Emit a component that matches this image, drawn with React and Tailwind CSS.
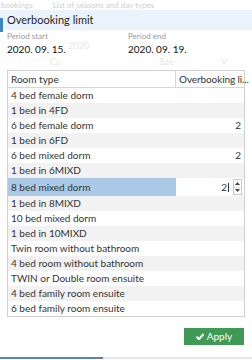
import { useState } from "react";

const rooms = [
  { name: "4 bed female dorm", limit: "" },
  { name: "1 bed in 4FD", limit: "" },
  { name: "6 bed female dorm", limit: "2" },
  { name: "1 bed in 6FD", limit: "" },
  { name: "6 bed mixed dorm", limit: "2" },
  { name: "1 bed in 6MIXD", limit: "" },
  { name: "8 bed mixed dorm", limit: "2", editing: true },
  { name: "1 bed in 8MIXD", limit: "" },
  { name: "10 bed mixed dorm", limit: "" },
  { name: "1 bed in 10MIXD", limit: "" },
  { name: "Twin room without bathroom", limit: "" },
  { name: "4 bed room without bathroom", limit: "" },
  { name: "TWIN or Double room ensuite", limit: "" },
  { name: "4 bed family room ensuite", limit: "" },
  { name: "6 bed family room ensuite", limit: "" },
];

const Spinner = () => (
  <div className="flex flex-col w-[9px] h-[16px] border border-[#c8c8c8] bg-white">
    <div className="flex-1 flex items-center justify-center border-b border-[#dcdcdc]">
      <svg width="5" height="3" viewBox="0 0 5 3">
        <path d="M0 3 L2.5 0 L5 3 Z" fill="#444" />
      </svg>
    </div>
    <div className="flex-1 flex items-center justify-center">
      <svg width="5" height="3" viewBox="0 0 5 3">
        <path d="M0 0 L2.5 3 L5 0 Z" fill="#444" />
      </svg>
    </div>
  </div>
);

const App = () => {
  const [selected] = useState(6);

  return (
    <div className="relative w-[252px] h-[360px] overflow-hidden bg-white font-['Lato',sans-serif] text-[#333]">
      {/* page behind the dialog, faded */}
      <div className="h-[10px] flex items-center gap-[18px] pl-[1px] text-[8px] leading-[9px] text-[#cfcfcf]">
        <span>bookings</span>
        <span className="bg-white px-[2px]">List of seasons and day types</span>
      </div>

      <div className="relative h-[20px] bg-[#eaf3fb] flex items-center pl-[7px]">
        <div className="absolute left-0 top-[8px] w-[3px] h-[14px] bg-[#3b86c6]" />
        <span className="text-[11px] text-[#1f1f1f]">Overbooking limit</span>
      </div>

      <div className="relative grid grid-cols-[121px_1fr] px-[7px] pt-[1px] h-[40px]">
        <div>
          <div className="text-[8px] leading-[11px] text-[#9a9a9a]">Period start</div>
          <div className="text-[10px] leading-[14px] text-[#111]">2020. 09. 15.</div>
        </div>
        <div>
          <div className="text-[8px] leading-[11px] text-[#9a9a9a]">Period end</div>
          <div className="text-[10px] leading-[14px] text-[#111]">2020. 09. 19.</div>
        </div>
        {/* ghosted text of the page below */}
        <span className="absolute left-[68px] top-[9px] text-[9px] text-[#e6e6e6]">2020</span>
        <span className="absolute left-[50px] top-[25px] text-[9px] text-[#e6e6e6]">Cs</span>
        <span className="absolute left-[160px] top-[25px] text-[9px] text-[#e6e6e6]">Sze</span>
        <span className="absolute left-[221px] top-[25px] text-[9px] text-[#e6e6e6]">V</span>
        <span className="absolute left-0 top-[25px] w-[3px] h-[3px] border-y border-[#333] -translate-x-[7px]" />
      </div>

      <div className="mx-[7px] w-[238px] border border-[#cfcfcf] text-[10px]">
        <div className="grid grid-cols-[168px_1fr] h-[17px] border-b border-[#d6d6d6] bg-white">
          <div className="flex items-center pl-[3px] border-r border-[#d6d6d6]">Room type</div>
          <div className="flex items-center pl-[3px] whitespace-nowrap tracking-[-0.1px]">Overbooking li...</div>
        </div>
        {rooms.map((room, i) => (
          <div
            key={room.name}
            className={
              "grid grid-cols-[168px_1fr] " +
              (i === selected ? "h-[18px] bg-white" : "h-[15px] " + (i % 2 === 0 ? "bg-white" : "bg-[#f2f2f2]"))
            }
          >
            <div
              className={
                "flex items-center pl-[3px] whitespace-nowrap overflow-hidden " +
                (i === selected ? "bg-[#a9c9e7]" : "")
              }
            >
              {room.name}
            </div>
            {i === selected ? (
              <div className="flex items-center justify-end gap-[4px] pr-[2px]">
                <span>
                  {room.limit}
                  <span className="inline-block w-[1px] h-[9px] bg-[#333] align-middle ml-[1px]" />
                </span>
                <Spinner />
              </div>
            ) : (
              <div className="flex items-center justify-end pr-[3px]">{room.limit}</div>
            )}
          </div>
        ))}
      </div>

      <div className="flex justify-end pr-[8px] pt-[11px]">
        <button className="flex items-center gap-[3px] h-[17px] w-[60px] justify-center bg-[#3e9a55] text-white text-[10px]">
          <svg width="8" height="7" viewBox="0 0 8 7">
            <path d="M0.5 3.8 L3 6.2 L7.5 1" fill="none" stroke="white" strokeWidth="2" />
          </svg>
          Apply
        </button>
      </div>

      <div className="absolute left-0 right-0 bottom-[1px] flex h-[2px]">
        <div className="w-[103px] bg-[#5d83aa]" />
        <div className="flex-1 bg-[#e6e6e6]" />
      </div>
    </div>
  );
};

export default App;
